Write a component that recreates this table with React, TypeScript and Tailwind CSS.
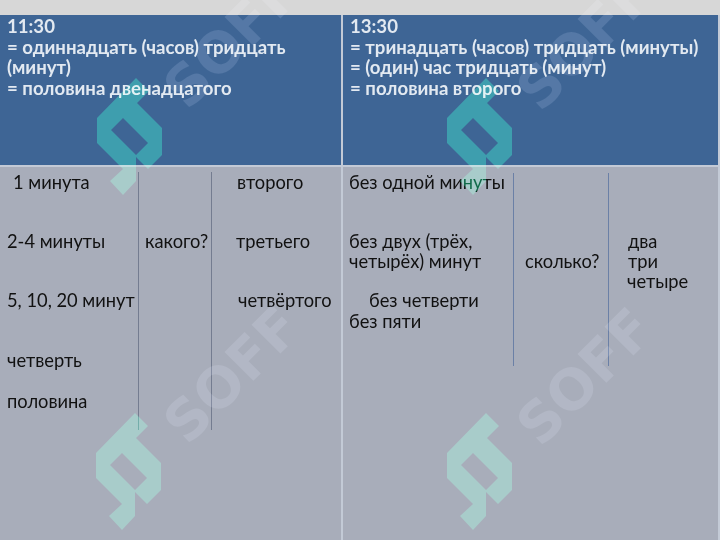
import React from "react";

const Logo = ({ className }: { className: string }) => (
  <svg
    className={"absolute pointer-events-none mix-blend-screen " + className}
    width="66"
    height="118"
    viewBox="0 0 66 118"
  >
    <path
      fillRule="evenodd"
      fill="#005f3c"
      d="M39 0 L52 13 L40 25 L65 50 L65 77 L51 91 L39 79 L39 103 L26 117 L13 103 L26 91 L0 65 L0 40 Z M14 52 L26 40 L51 65 L39 77 Z"
    />
  </svg>
);

const Soff = ({ className }: { className: string }) => (
  <div
    className={
      "absolute pointer-events-none mix-blend-screen -rotate-45 text-[56px] font-bold leading-none text-[#1e2028] " +
      className
    }
    style={{ fontFamily: '"DejaVu Sans", "Liberation Sans", sans-serif' }}
  >
    SOFF
  </div>
);

const L = ({ children, className = "" }: { children: React.ReactNode; className?: string }) => (
  <div className={"h-[20px] whitespace-nowrap " + className}>{children}</div>
);

export default function App() {
  return (
    <div
      className="relative w-[720px] h-[540px] overflow-hidden bg-[#d7d7d7]"
      style={{ fontFamily: 'Lato, "Noto Sans", sans-serif' }}
    >
      <div className="h-[15px] bg-[#d7d7d7]" />
      <div className="grid grid-cols-[341px_375px] grid-rows-[150px_373px] gap-[2px] bg-[#c3cad6] pr-[2px] h-[525px]">
        {/* header cells */}
        <div className="bg-[#3e6595] pl-[7px] pt-[1px] text-[18.6px] leading-[20.5px] font-bold text-[#e2e9f1]">
          <div>11:30</div>
          <div>= одиннадцать (часов) тридцать</div>
          <div>(минут)</div>
          <div>= половина двенадцатого</div>
        </div>
        <div className="bg-[#3e6595] pl-[7px] pt-[1px] text-[18.6px] leading-[20.5px] font-bold text-[#e2e9f1]">
          <div>13:30</div>
          <div>= тринадцать (часов) тридцать (минуты)</div>
          <div>= (один) час тридцать (минут)</div>
          <div>= половина второго</div>
        </div>

        {/* body left */}
        <div className="bg-[#a8adba] flex text-[18.3px] leading-[20px] text-[#111111]">
          <div className="w-[138px] flex flex-col pt-[5px]">
            <L className="pl-[13px]">1 минута</L>
            <L className="pl-[7px] mt-[39px]">2-4 минуты</L>
            <L className="pl-[7px] mt-[39px]">5, 10, 20 минут</L>
            <L className="pl-[7px] mt-[40px]">четверть</L>
            <L className="pl-[7px] mt-[21px]">половина</L>
          </div>
          <div className="w-[74px] mt-[5px] h-[258px] border-l border-r border-[#747c90] pt-[59px] pl-[6px]">
            <L>какого?</L>
          </div>
          <div className="flex-1 flex flex-col pt-[5px]">
            <L className="pl-[25px]">второго</L>
            <L className="pl-[24px] mt-[39px]">третьего</L>
            <L className="pl-[26px] mt-[39px]">четвёртого</L>
          </div>
        </div>

        {/* body right */}
        <div className="bg-[#a8adba] flex text-[18.3px] leading-[20px] text-[#111111]">
          <div className="w-[170px] flex flex-col pt-[5px] pl-[6px]">
            <L>без одной минуты</L>
            <L className="mt-[39px]">без двух (трёх,</L>
            <L>четырёх) минут</L>
            <L className="mt-[19px] pl-[20px]">без четверти</L>
            <L className="mt-[1px]">без пяти</L>
          </div>
          <div className="w-[96px] mt-[6px] h-[193px] border-l border-r border-[#6b80a6] pt-[78px] pl-[11px]">
            <L>сколько?</L>
          </div>
          <div className="flex-1 flex flex-col pt-[64px] pl-[18px]">
            <L className="pl-[1px]">два</L>
            <L className="pl-[1px]">три</L>
            <L>четыре</L>
          </div>
        </div>
      </div>

      <Logo className="left-[97px] top-[78px]" />
      <Logo className="left-[447px] top-[78px]" />
      <Logo className="left-[96px] top-[413px]" />
      <Logo className="left-[447px] top-[413px]" />

      <Soff className="left-[150px] top-[12px]" />
      <Soff className="left-[503px] top-[14px]" />
      <Soff className="left-[150px] top-[347px]" />
      <Soff className="left-[503px] top-[349px]" />
    </div>
  );
}
